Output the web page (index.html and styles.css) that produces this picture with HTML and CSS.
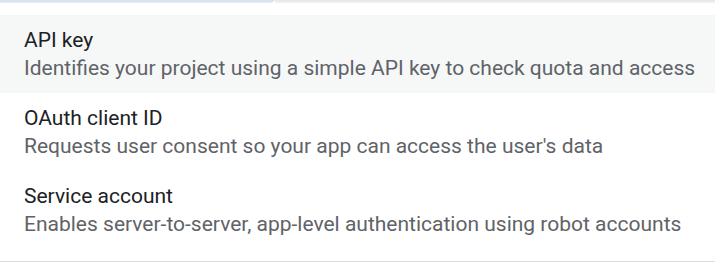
FILE: index.html
```html
<!DOCTYPE html>
<html>
<head>
<meta charset="utf-8">
<link rel="stylesheet" href="styles.css">
</head>
<body>
<div class="topbar"><div class="topbar-active"></div><div class="topbar-rest"></div></div>
<ul class="menu">
  <li class="item item-hover">
    <div class="title">API key</div>
    <div class="desc">Identifies your project using a simple API key to check quota and access</div>
  </li>
  <li class="item">
    <div class="title">OAuth client ID</div>
    <div class="desc">Requests user consent so your app can access the user's data</div>
  </li>
  <li class="item">
    <div class="title">Service account</div>
    <div class="desc">Enables server-to-server, app-level authentication using robot accounts</div>
  </li>
</ul>
<div class="bottom-line"></div>
</body>
</html>
```
FILE: styles.css
```css
html, body {
  margin: 0;
  padding: 0;
  background: #ffffff;
  width: 715px;
  height: 262px;
  overflow: hidden;
  font-family: Roboto, "Liberation Sans", sans-serif;
}
.topbar {
  display: flex;
  height: 3px;
}
.topbar-active {
  width: 275px;
  background: linear-gradient(#d6e0f0, #e8edf7);
  clip-path: polygon(0 0, 100% 0, calc(100% - 3px) 100%, 0 100%);
}
.topbar-rest {
  flex: 1;
  background: linear-gradient(#e6e6e6, #f4f4f4);
}
.menu {
  list-style: none;
  margin: 12px 0 0 0;
  padding: 0;
}
.item {
  height: 78px;
  box-sizing: border-box;
  padding: 11px 24px;
}
.item-hover {
  background: #f6f8f8;
}
.title {
  font-size: 21px;
  line-height: 28px;
  color: #202124;
}
.desc {
  font-size: 21px;
  line-height: 28px;
  color: #5f6368;
  white-space: nowrap;
}
.bottom-line {
  margin-top: 12px;
  height: 1px;
  background: #dadce0;
}
```
